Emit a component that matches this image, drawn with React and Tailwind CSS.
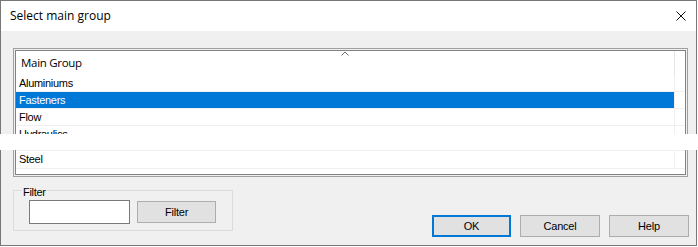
import React from "react"

const rows = [
  { label: "Aluminiums", h: "h-[17px]" },
  { label: "Fasteners", h: "h-[17px]", selected: true },
  { label: "Flow", h: "h-[17px]" },
  { label: "Hydraulics", h: "h-[17px]" },
  { label: "", h: "h-[8px]" },
  { label: "Steel", h: "h-[18px]" },
]

function Btn({ children, primary, className = "" }) {
  return (
    <button
      className={`flex items-center justify-center bg-[#e1e1e1] text-[11px] tracking-[-0.2px] text-black ${
        primary ? "border-2 border-[#0078d7]" : "border border-[#adadad]"
      } ${className}`}
    >
      {children}
    </button>
  )
}

export default function App() {
  return (
    <div className="relative h-[247px] w-[698px] bg-white font-['Liberation_Sans',Arial,sans-serif]">
      <div className="flex h-[246px] w-[697px] flex-col border border-[#777777]">
        {/* Title bar */}
        <div className="flex h-[30px] items-center justify-between bg-white pl-[9px] pr-[9px]">
          <span className="font-['Open_Sans',sans-serif] text-[12px] text-black">Select main group</span>
          <svg width="10" height="10" viewBox="0 0 10 10" className="mr-[1px]">
            <path d="M0.5 0.5 L9.5 9.5 M9.5 0.5 L0.5 9.5" stroke="#111" strokeWidth="1" />
          </svg>
        </div>

        {/* Body */}
        <div className="flex flex-1 flex-col bg-[#f0f0f0] pl-[12px] pr-[8px] pt-[17px]">
          {/* List view */}
          <div className="h-[129px] w-[675px] border border-[#a0a0a0] p-[1px]">
            <div className="h-full w-full overflow-hidden border border-[#828282] bg-white">
              <div className="flex h-[24px]">
                <div className="relative flex w-[659px] items-center border-r border-[#e5e5e5] pl-[5px] pb-[1px]">
                  <svg width="8" height="5" viewBox="0 0 8 5" className="absolute left-[325px] top-0">
                    <path d="M0.5 4.5 L4 1 L7.5 4.5" stroke="#6d6d6d" strokeWidth="1" fill="none" />
                  </svg>
                  <span className="font-['Open_Sans',sans-serif] text-[11.5px] leading-[14px] tracking-[-0.3px] text-black">Main Group</span>
                </div>
              </div>
              {rows.map((r, i) => (
                <div key={i} className={`flex ${r.h} border-b border-[#efefef]`}>
                  <div
                    className={`flex w-[659px] items-center border-r border-[#efefef] pl-[3px] text-[11px] tracking-[-0.3px] ${
                      r.selected ? "bg-[#0078d7] text-white" : "text-black"
                    }`}
                  >
                    {r.label}
                  </div>
                </div>
              ))}
            </div>
          </div>

          {/* Lower row */}
          <div className="flex items-start justify-between">
            <div className="relative mt-[13px] flex h-[41px] w-[220px] items-start gap-[7px] border border-[#dcdcdc] pl-[15px] pt-[9px]">
              <span className="absolute left-[8px] top-[-5px] bg-[#f0f0f0] px-[1px] text-[11px] leading-[13px] tracking-[-0.3px] text-black">
                Filter
              </span>
              <input className="h-[24px] w-[101px] border border-[#7a7a7a] bg-white outline-none" />
              <Btn className="mt-[1px] h-[22px] w-[79px]">Filter</Btn>
            </div>
            <div className="mr-[-1px] mt-[38px] flex gap-[9px]">
              <Btn primary className="h-[22px] w-[79px]">OK</Btn>
              <Btn className="h-[22px] w-[80px]">Cancel</Btn>
              <Btn className="h-[22px] w-[80px]">Help</Btn>
            </div>
          </div>
        </div>
      </div>

      {/* redraw artifact strip */}
      <div className="absolute left-0 right-0 top-[134px] h-[16px] bg-white" />
    </div>
  )
}
